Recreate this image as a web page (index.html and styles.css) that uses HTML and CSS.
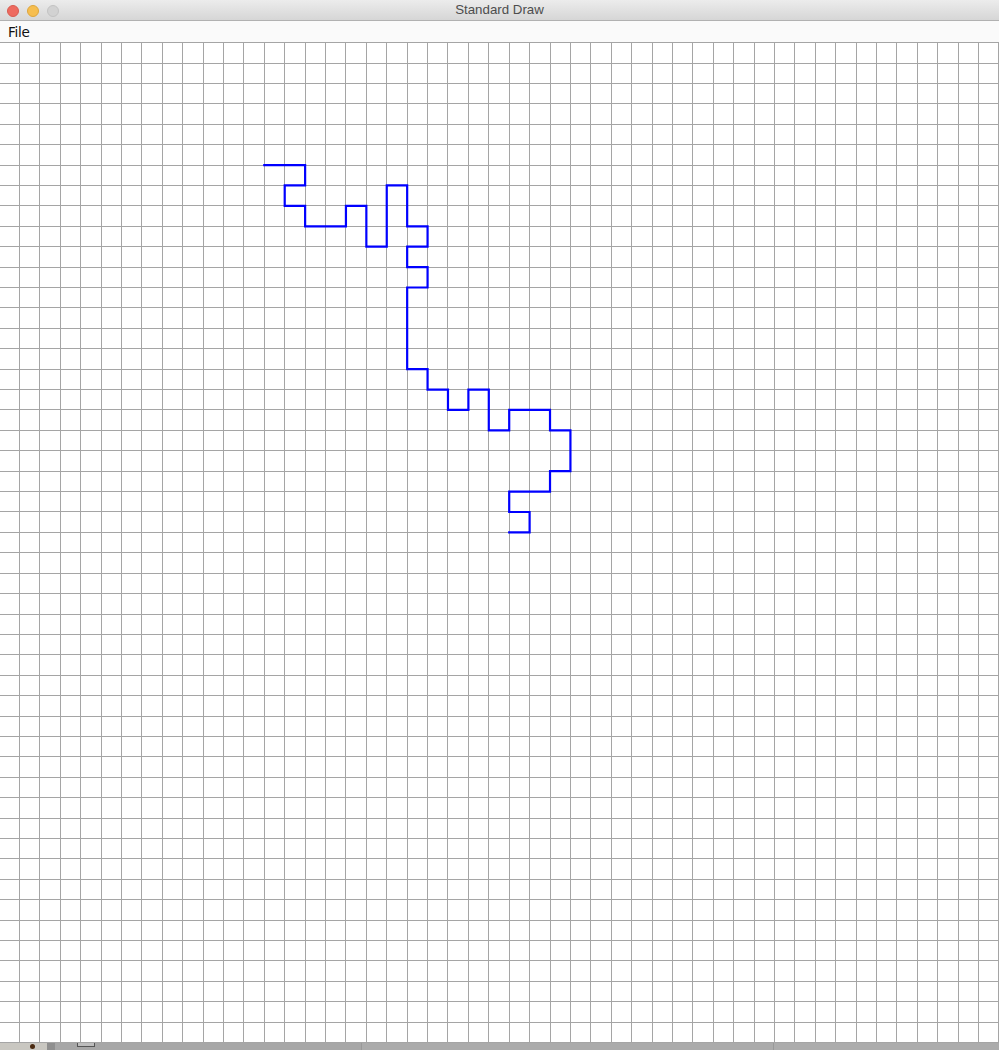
FILE: index.html
```html
<!DOCTYPE html>
<html>
<head>
<meta charset="utf-8">
<title>Standard Draw</title>
<link rel="stylesheet" href="styles.css">
</head>
<body>
<div class="window">
  <div class="titlebar">
    <div class="lights">
      <span class="light red"></span>
      <span class="light yellow"></span>
      <span class="light gray"></span>
    </div>
    <div class="title">Standard Draw</div>
  </div>
  <div class="menubar"><span class="menu">File</span></div>
  <div class="canvas">
    <svg class="drawing" width="1000" height="1000" viewBox="0 -0.03 49 49" preserveAspectRatio="none">
      <path class="grid" d="M0 0V49M1 0V49M2 0V49M3 0V49M4 0V49M5 0V49M6 0V49M7 0V49M8 0V49M9 0V49M10 0V49M11 0V49M12 0V49M13 0V49M14 0V49M15 0V49M16 0V49M17 0V49M18 0V49M19 0V49M20 0V49M21 0V49M22 0V49M23 0V49M24 0V49M25 0V49M26 0V49M27 0V49M28 0V49M29 0V49M30 0V49M31 0V49M32 0V49M33 0V49M34 0V49M35 0V49M36 0V49M37 0V49M38 0V49M39 0V49M40 0V49M41 0V49M42 0V49M43 0V49M44 0V49M45 0V49M46 0V49M47 0V49M48 0V49M49 0V49M0 0H49M0 1H49M0 2H49M0 3H49M0 4H49M0 5H49M0 6H49M0 7H49M0 8H49M0 9H49M0 10H49M0 11H49M0 12H49M0 13H49M0 14H49M0 15H49M0 16H49M0 17H49M0 18H49M0 19H49M0 20H49M0 21H49M0 22H49M0 23H49M0 24H49M0 25H49M0 26H49M0 27H49M0 28H49M0 29H49M0 30H49M0 31H49M0 32H49M0 33H49M0 34H49M0 35H49M0 36H49M0 37H49M0 38H49M0 39H49M0 40H49M0 41H49M0 42H49M0 43H49M0 44H49M0 45H49M0 46H49M0 47H49M0 48H49M0 49H49"/>
      <path class="walk" d="M13 6H15V7H14V8H15V9H17V8H18V10H19V7H20V9H21V10H20V11H21V12H20V16H21V17H22V18H23V17H24V19H25V18H27V19H28V21H27V22H25V23H26V24H25"/>
    </svg>
  </div>
  <div class="desktop">
    <div class="seg seg-a"><span class="dot"></span></div>
    <div class="seg seg-b"></div>
    <div class="seg seg-c"><span class="box"></span></div>
    <div class="seg seg-d"></div>
    <div class="seg seg-e"></div>
  </div>
</div>
</body>
</html>
```
FILE: styles.css
```css
html, body {
  margin: 0;
  padding: 0;
  background: #ffffff;
  overflow: hidden;
}

.window {
  width: 999px;
  height: 1050px;
  display: flex;
  flex-direction: column;
  overflow: hidden;
}

.titlebar {
  height: 20px;
  flex: 0 0 20px;
  background: linear-gradient(#ececec, #d6d6d6);
  border-bottom: 1px solid #b1b1b1;
  display: flex;
  align-items: center;
  position: relative;
}

.lights {
  display: flex;
  gap: 8px;
  padding-left: 7px;
  margin-top: 1px;
}

.light {
  width: 12px;
  height: 12px;
  border-radius: 50%;
  box-sizing: border-box;
}

.red { background: #ee6a5f; border: 1px solid #d85b50; }
.yellow { background: #f6be4f; border: 1px solid #dea63c; }
.gray { background: #d2d2d2; border: 1px solid #c3c3c3; }

.title {
  position: absolute;
  left: 0;
  right: 0;
  top: 2px;
  text-align: center;
  font-family: "Liberation Sans", Arial, sans-serif;
  font-size: 13.3px;
  color: #4d4d4d;
  line-height: 16px;
}

.menubar {
  height: 21px;
  flex: 0 0 21px;
  background: #fafafa;
  display: flex;
  align-items: center;
  padding-left: 8px;
}

.menu {
  font-family: "DejaVu Sans", "Liberation Sans", sans-serif;
  font-size: 13.6px;
  color: #111111;
  line-height: 16px;
  margin-top: 1px;
  letter-spacing: -0.3px;
}

.canvas {
  height: 1001px;
  flex: 0 0 1001px;
  background: #ffffff;
  overflow: hidden;
}

.drawing {
  display: block;
  margin-left: -1px;
  overflow: visible;
}

.grid {
  fill: none;
  stroke: #a5a5a5;
  stroke-width: 1px;
  vector-effect: non-scaling-stroke;
  shape-rendering: crispEdges;
}

.walk {
  fill: none;
  stroke: #0000ff;
  stroke-width: 2.2px;
  vector-effect: non-scaling-stroke;
  stroke-linejoin: miter;
  stroke-linecap: square;
}

.desktop {
  flex: 1 1 auto;
  display: flex;
  background: #a9a9a9;
}

.seg { height: 100%; position: relative; }

.seg-a { width: 47px; background: #c9c7c1; }
.seg-b { width: 8px; background: #8f8f8f; }
.seg-c { width: 306px; background: #a7a7a7; }
.seg-d { width: 411px; background: #ababab; border-left: 1px solid #999; }
.seg-e { flex: 1; background: #acacac; border-left: 1px solid #999; }

.dot {
  position: absolute;
  left: 30px;
  top: 1px;
  width: 5px;
  height: 5px;
  border-radius: 50%;
  background: #4a2a10;
}

.box {
  position: absolute;
  left: 22px;
  top: 0;
  width: 16px;
  height: 3px;
  border: 1px solid #555;
  border-top: none;
  background: #bdbdbd;
}
```
